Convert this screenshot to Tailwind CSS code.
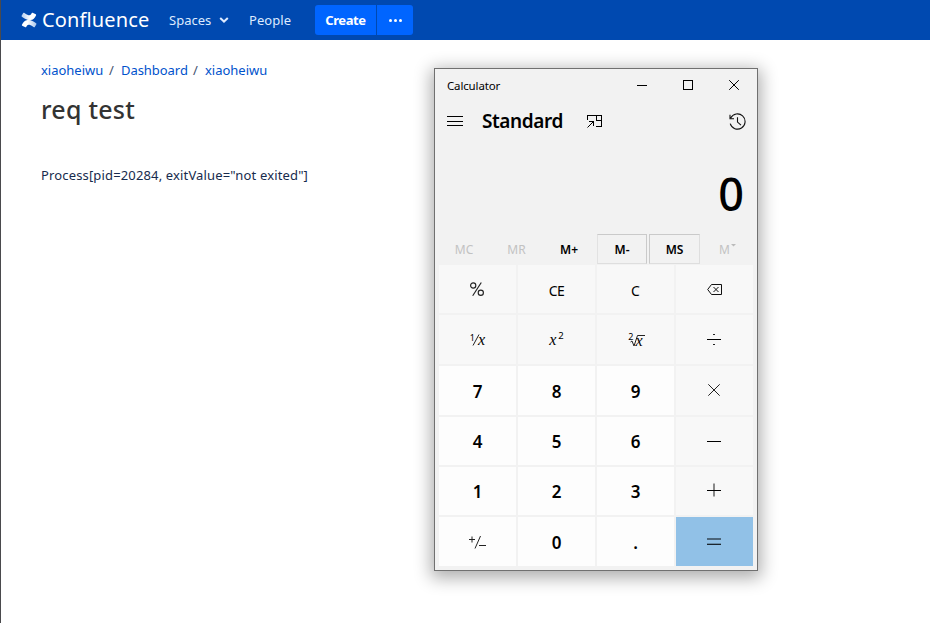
<!DOCTYPE html>
<html lang="en">
<head>
<meta charset="utf-8">
<title>req test - Confluence</title>
<script src="https://cdn.jsdelivr.net/npm/@tailwindcss/browser@4"></script>
</head>
<body class="relative h-[623px] w-[930px] overflow-hidden border-l border-[#4a4a4d] bg-white font-['Noto_Sans','Open_Sans',sans-serif] text-[13px] text-[#172b4d]">
<header class="flex h-10 items-center bg-[#0049b0] pl-5 text-[#deebff]">
  <svg class="h-4 w-4 shrink-0" viewBox="0 0 16 16">
    <defs><linearGradient id="g" x1="0" x2="1"><stop offset="0" stop-color="#b3cdf0"/><stop offset=".6" stop-color="#fff"/></linearGradient>
    <linearGradient id="h" x1="0" x2="1"><stop offset=".4" stop-color="#fff"/><stop offset="1" stop-color="#a5c4ec"/></linearGradient></defs>
    <path fill="url(#g)" d="M2.200.9.600 3.700q-.3.600.3 1C4.200 6.900 6.800 8.400 9.500 8.100c2.700-.2 4.200-2.100 5.600-4.900q.2-.6-.3-.9L11.600.8q-.5-.2-.8.3C9.800 3 9 3.700 7.500 3.200 6 2.700 4.500 1.800 3.100.8q-.5-.3-.9.1z"/>
    <path fill="url(#h)" d="M13.800 15.100 15.400 12.300q.3-.6-.3-1C11.800 9.100 9.200 7.600 6.500 7.900c-2.700.2-4.200 2.100-5.600 4.900q-.2.600.3.900l3.200 1.500q.5.200.8-.3c1-1.900 1.800-2.600 3.300-2.100 1.500.5 3 1.400 4.400 2.400q.5.300.9-.1z"/>
  </svg>
  <span class="ml-[5px] w-[107px] whitespace-nowrap text-[20px] leading-10 tracking-[0.13px] text-white">Confluence</span>
  <span class="ml-5 w-[43px] whitespace-nowrap pt-px tracking-[0px]">Spaces</span>
  <svg class="ml-[7px] h-[10px] w-[10px]" viewBox="0 0 10 10" fill="none" stroke="currentColor" stroke-width="2"><path d="M1.200 2.900 5 6.500 8.800 2.900"/></svg>
  <span class="ml-[20px] w-[43px] whitespace-nowrap pt-px tracking-[0.05px]">People</span>
  <div class="ml-[23px] flex h-[30px] w-[98px] gap-px">
    <button class="w-[61px] rounded-l-[3px] bg-[#0065ff] pt-px font-bold tracking-[-0.4px] text-white">Create</button>
    <button class="flex flex-1 items-center justify-center gap-[2px] rounded-r-[3px] bg-[#0065ff]"><i class="size-[3px] rounded-full bg-white"></i><i class="size-[3px] rounded-full bg-white"></i><i class="size-[3px] rounded-full bg-white"></i></button>
  </div>
</header>
<main class="pl-10 pt-[21px]">
  <nav class="flex h-5 items-center gap-[6px] whitespace-nowrap text-[#0052cc]"><a class="w-[62px] tracking-[-0.02px]">xiaoheiwu</a><span class="w-[6px] text-[#42526e]">/</span><a class="w-[66px] tracking-[-0.05px]">Dashboard</a><span class="w-[6px] text-[#42526e]">/</span><a class="tracking-[-0.02px]">xiaoheiwu</a></nav>
  <h1 class="mt-[10px] text-[25px] font-medium leading-9 tracking-[0.25px] text-[#333]">req test</h1>
  <p class="mt-[38px] whitespace-nowrap leading-5 tracking-[0.15px]">Process[pid=20284, exitValue="not exited"]</p>
</main>

<section class="absolute left-[433px] top-[68px] h-[503px] w-[324px] border border-[#707070] bg-[#f2f2f2] text-black shadow-[0_4px_16px_3px_rgba(0,0,0,0.32)]">
  <div class="flex h-8 items-center pl-3">
    <span class="flex-1 pt-[2px] text-[11.5px] tracking-[-0.15px]">Calculator</span>
    <div class="grid h-8 w-[138px] grid-cols-3 place-items-center">
      <svg class="size-[10px]" viewBox="0 0 10 10" shape-rendering="crispEdges"><path stroke="#000" d="M0 5.500h10"/></svg>
      <svg class="size-[10px]" viewBox="0 0 10 10" shape-rendering="crispEdges"><path fill="none" stroke="#000" d="M.5.5h9v9h-9z"/></svg>
      <svg class="size-[10px]" viewBox="0 0 10 10"><path stroke="#000" d="m.2.2 9.600 9.600M9.800.2.2 9.800"/></svg>
    </div>
  </div>
  <div class="flex h-10 items-center pl-3 pr-[11px]">
    <svg class="h-[10px] w-4" viewBox="0 0 16 10" shape-rendering="crispEdges"><path stroke="#000" d="M0 .5h16M0 5.500h16M0 9.500h16"/></svg>
    <span class="ml-[19px] w-[82px] text-[19px] font-semibold tracking-[-0.4px]">Standard</span>
    <svg class="ml-[23px] h-[13px] w-[15px]" viewBox="0 0 15 13" shape-rendering="crispEdges" fill="none" stroke="#000"><path d="M.5 5V.5h14v11H9M9.500 1v4h5M2 6.500h4.500V11"/><path shape-rendering="auto" d="m.5 12.500 6-6"/></svg>
    <svg class="ml-auto h-[17px] w-[17px]" viewBox="0 0 17 17" fill="none" stroke="#111" stroke-width="1.100"><path d="M1.700 5.100A7.600 7.600 0 1 1 1.200 10.700M1 1.800v4h4M8.500 4.200v4.900l3.500 3.100"/></svg>
  </div>
  <div class="flex h-[92px] items-center justify-end pr-[13px] pt-[12px] text-[45px] font-medium leading-none">0</div>
  <div class="flex h-[32px] gap-[2px] pl-1 pr-1 pt-[1px] text-[12px] font-semibold leading-[30px] text-center">
    <div class="w-[50px] pt-px font-normal text-[#c2c2c2]">MC</div>
    <div class="w-[51px] pt-px font-normal text-[#c2c2c2]">MR</div>
    <div class="w-[50px] pt-px">M+</div>
    <div class="ml-px h-[30px] w-[50px] border border-[#cacaca] border-b-[#dedede] border-l-[#e2e2e2] leading-[29px]">M-</div>
    <div class="h-[30px] w-[51px] border border-[#cacaca] border-b-[#dedede] border-r-[#dedede] leading-[29px]">MS</div>
    <div class="flex flex-1 justify-center gap-px pt-px font-normal text-[#c2c2c2]">M<svg class="mt-[9px] h-[3px] w-[5px]" viewBox="0 0 5 3"><path fill="#bbb" d="M0 0h5L2.500 2.500z"/></svg></div>
  </div>
  <div class="grid h-[301px] grid-cols-4 grid-rows-[48px_49px_49px_48px_48px_49px] gap-[2px] px-1 text-[17px] font-semibold [&>div]:flex [&>div]:items-center [&>div]:justify-center [&>div]:pt-[2px]">
    <div class="bg-[#f8f8f8]"><svg class="mb-[3px] mr-px size-[14px]" viewBox="0 0 14 14" fill="none" stroke="#222" stroke-width="1.150"><circle cx="3.200" cy="3.500" r="2.600"/><circle cx="10.800" cy="10.700" r="2.600"/><path d="M11.300.5 2.700 13.700"/></svg></div>
    <div class="bg-[#f8f8f8] text-[14px] font-normal tracking-[-0.6px]">CE</div>
    <div class="bg-[#f8f8f8] text-[14px] font-normal">C</div>
    <div class="bg-[#f8f8f8]"><svg class="mb-[2px] h-[11px] w-[15px]" viewBox="0 0 15 11" fill="none" stroke="#111"><path d="M4.500.5h10v10h-10L.7 5.500zM6.500 3l5 5M11.500 3l-5 5"/></svg></div>

    <div class="bg-[#f8f8f8] font-normal"><span class="relative -top-[3px] text-[9px]">1</span><svg class="-ml-[3px] mb-[2px] h-[12px] w-[8px]" viewBox="0 0 8 12"><path stroke="#222" d="M7 .5 1 11.500"/></svg><i class="-ml-[2px] mb-[2px] font-['Liberation_Serif',serif] text-[16px] leading-none">x</i></div>
    <div class="bg-[#f8f8f8] font-normal"><i class="mb-px font-['Liberation_Serif',serif] text-[16px] leading-none">x</i><span class="relative -top-[4px] ml-[2px] text-[9.5px]">2</span></div>
    <div class="bg-[#f8f8f8] font-normal"><span class="relative -top-[4px] text-[9px]">2</span><svg class="-ml-[4px] mb-px h-[13px] w-[15px]" viewBox="0 0 15 13" fill="none" stroke="#222"><path d="m.5 8 1.500-1 2 5L7.500 1.500H15"/></svg><i class="-ml-[9px] mt-px font-['Liberation_Serif',serif] text-[16px] leading-none">x</i></div>
    <div class="bg-[#f8f8f8]"><svg class="mb-[2px] mr-px h-[13px] w-[14px]" viewBox="0 0 14 13" shape-rendering="crispEdges"><path stroke="#000" d="M0 6.500h14"/><path fill="#222" d="M6 1h2v1H6zM6 11h2v1H6z"/></svg></div>

    <div class="bg-[#fdfdfd]">7</div><div class="bg-[#fdfdfd]">8</div><div class="bg-[#fdfdfd]">9</div>
    <div class="bg-[#f8f8f8]"><svg class="mb-[4px] mr-px size-[12px]" viewBox="0 0 12 12"><path stroke="#222" d="m.3.3 11.400 11.400M11.700.3.3 11.700"/></svg></div>
    <div class="bg-[#fdfdfd]">4</div><div class="bg-[#fdfdfd]">5</div><div class="bg-[#fdfdfd]">6</div>
    <div class="bg-[#f8f8f8]"><svg class="mb-[1px] mr-px h-[1px] w-[14px]" viewBox="0 0 14 1"><path fill="#000" d="M0 0h14v1H0z"/></svg></div>
    <div class="bg-[#fdfdfd]">1</div><div class="bg-[#fdfdfd]">2</div><div class="bg-[#fdfdfd]">3</div>
    <div class="bg-[#f8f8f8]"><svg class="mb-[4px] mr-px size-[14px]" viewBox="0 0 14 14"><path stroke="#888" stroke-width="2" d="M7 .5v13"/><path stroke="#000" d="M0 7.500h14"/></svg></div>
    <div class="bg-[#fdfdfd]"><svg class="mb-[2px] h-[14px] w-[17px]" viewBox="0 0 17 14" fill="none" stroke="#222"><path d="M0 4.500h6M3 1.500v6M11.500 1 6 13.500M10 10.500h7"/></svg></div>
    <div class="bg-[#fdfdfd]">0</div><div class="bg-[#fdfdfd]">.</div>
    <div class="bg-[#91c1e7]"><svg class="mb-[1px] mr-px h-[8px] w-[14px]" viewBox="0 0 14 8"><path fill="#4b657a" d="M0 0h14v2H0z"/><path fill="#1c262e" d="M0 6h14v1H0z"/><path fill="#6b8faa" d="M0 5h14v1H0z"/></svg></div>
  </div>
</section>
</body>
</html>
